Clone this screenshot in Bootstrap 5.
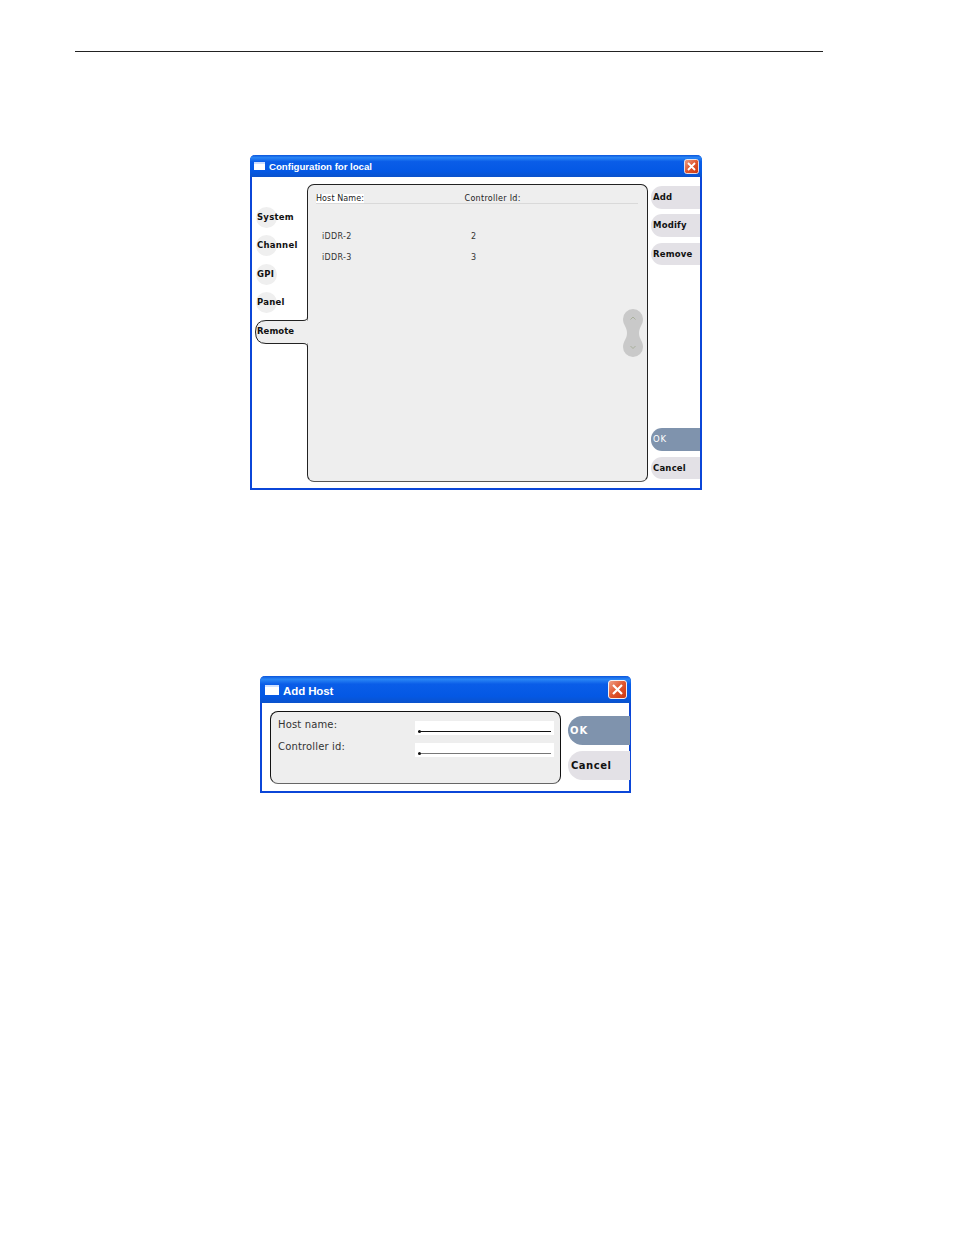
<!DOCTYPE html>
<html lang="en"><head><meta charset="utf-8"><title>Remote configuration</title>
<link href="https://cdn.jsdelivr.net/npm/bootstrap@5.3.0/dist/css/bootstrap.min.css" rel="stylesheet">
<style>
html,body{margin:0;background:#fff;height:1235px;overflow:hidden}
body{font-family:"DejaVu Sans",sans-serif;color:#111}
.top-rule{margin:51px 131px 0 75px;border-top:1px solid #222;height:0}
.xp-win{border:2px solid #0b46d8;border-top:0;border-radius:5px 5px 0 0;background:#fff}
.win-one{width:452px;height:335px;margin:103px 0 0 250px}
.win-two{width:371px;height:117px;margin:186px 0 0 260px}
.xp-bar{margin:0 -2px;background:linear-gradient(#0a55dc,#2a86f5 12%,#0a5de8 30%,#0458e4 75%,#0a52cc);color:#fff;border-radius:5px 5px 0 0;font-family:"Liberation Sans",sans-serif;font-weight:700}
.bar-txt{position:relative}
.win-one .xp-bar{height:22px;padding:0 3px 0 4px;font-size:9.7px;letter-spacing:-.04px;gap:4px}
.win-two .xp-bar{height:27px;padding:0 4px 0 5px;font-size:11.5px;letter-spacing:-.1px;gap:4px}
.win-one .bar-txt{top:1.500px}
.win-two .bar-txt{top:2px}
.bar-ico{background:#fff;border-top:2px solid #cfe0ff;flex:none}
.win-one .bar-ico{width:11px;height:8px}
.win-two .bar-ico{width:14px;height:10px}
.xp-close{flex:none;margin-left:auto;display:block;border-radius:2px}
.win-one .xp-close{width:15px;height:15px}
.win-two .xp-close{width:19px;height:19px}
.one-body{height:313px;padding:7px 0 8px 3px}
.tab-col{width:52px;flex:none;padding-top:23px;gap:6.4px}
.tab-item{height:22px;font-size:8.5px;font-weight:700;letter-spacing:.25px;line-height:21px;padding-left:2px;position:relative;white-space:nowrap}
.tab-item::before{content:"";position:absolute;left:1px;top:0;width:21px;height:21px;border-radius:50%;background:#efefef;z-index:0}
.tab-item span{position:relative}
.tab-on{height:24px;line-height:20px;padding-left:2px;position:relative;z-index:2;width:54px;letter-spacing:.05px}
.tab-on::before{display:none}
.tab-shape{position:absolute;left:0;top:-5px;width:56px;height:34px}
.one-panel{width:341px;flex:none;height:298px;background:#eee;border:1px solid #222;border-bottom-color:#555;border-radius:7px;position:relative;padding:9px 9px 0 8px}
.col-a{width:148.500px;flex:none}
.head-row{font-size:8px;letter-spacing:.3px;line-height:10px;height:10px;border-bottom:1px solid #d9d9d9;color:#222}
.head-a{background:#fff;letter-spacing:.1px}
.data-row{font-size:8px;letter-spacing:.3px;line-height:10px;color:#333;padding-left:6px}
.data-row .col-a{width:149px}
.row-first{margin-top:28px}.row-next{margin-top:11px}
.scroller{position:absolute;left:315px;top:124px;width:20px;height:48px}
.btn-col{width:49px;flex:none;margin-left:3px;height:295px;padding-top:2px}
.pill{height:22.5px;border-radius:11px 0 0 11px;background:#e3e1e6;font-size:8.5px;font-weight:700;letter-spacing:.2px;line-height:23px;padding-left:2px;margin-bottom:5.800px;color:#111;white-space:nowrap}
.pill-on{background:#7f93ad;color:#fff;font-weight:400;letter-spacing:.9px;margin-top:auto}
.two-body{height:90px;padding:8px 0 0 8px}
.two-panel{width:291px;height:73px;flex:none;background:#eee;border:1.5px solid #111;border-bottom-color:#666;border-radius:8px;padding:4px 6px 0 7px;font-size:10px;letter-spacing:.15px;color:#333}
.form-line{height:22px}
.lab-cell{width:137px;flex:none;line-height:18px}
.lab-low{line-height:17px}
.fld-cell{width:139px;height:14px;flex:none;background:#fff;margin-top:5px;position:relative;padding:0 3px 0 3px}
.fld-rule{margin-top:10px;height:0;border-top:1px solid #111;position:relative}
.fld-rule::before{content:"";position:absolute;left:0;top:-2px;width:3px;height:3px;border-radius:50%;background:#111}
.fld-dim{border-top-color:#777}
.pill-col{width:62px;flex:none;margin-left:7px;padding-top:5px}
.pill-big{height:29px;border-radius:15px 0 0 15px;font-size:10px;line-height:29px;padding-left:3px;margin-bottom:6px;letter-spacing:.5px}
.pill-big.pill-on{font-weight:700;padding-left:2px;letter-spacing:1px}
</style></head><body>
<div class="top-rule"></div>

<section class="xp-win win-one">
  <div class="xp-bar d-flex align-items-center"><i class="bar-ico"></i><span class="bar-txt">Configuration for local</span>
    <svg class="xp-close" viewBox="0 0 15 15"><defs><linearGradient id="c1" x1="0" y1="0" x2="1" y2="1"><stop offset="0" stop-color="#f0a48c"/><stop offset=".5" stop-color="#e0562e"/><stop offset="1" stop-color="#c8340f"/></linearGradient></defs><rect x=".5" y=".5" width="14" height="14" rx="2" fill="url(#c1)" stroke="#fff" stroke-width=".8"/><path d="M4 4l7 7M11 4l-7 7" stroke="#fff" stroke-width="1.8"/></svg></div>
  <div class="one-body d-flex">
    <div class="tab-col d-flex flex-column">
      <div class="tab-item"><span>System</span></div>
      <div class="tab-item"><span>Channel</span></div>
      <div class="tab-item"><span>GPI</span></div>
      <div class="tab-item"><span>Panel</span></div>
      <div class="tab-item tab-on">
        <svg class="tab-shape" viewBox="0 0 56 34"><rect x="40" y="4.500" width="16" height="23" fill="#eee"/><path d="M52.500 0V1Q52.500 4.500 48 4.500H11Q.5 4.500 .5 16Q.5 27.500 11 27.500H48Q52.500 27.500 52.500 31V34" fill="#eee" stroke="#222" stroke-width="1"/><rect x="48" y="5.500" width="8" height="21" fill="#eee"/></svg>
        <span>Remote</span></div>
    </div>
    <div class="one-panel">
      <div class="head-row d-flex"><div class="col-a"><span class="head-a">Host Name:</span></div><div>Controller Id:</div></div>
      <div class="data-row d-flex row-first"><div class="col-a">iDDR-2</div><div>2</div></div>
      <div class="data-row d-flex row-next"><div class="col-a">iDDR-3</div><div>3</div></div>
      <svg class="scroller" viewBox="0 0 20 48"><path d="M10 0a10 10 0 0 1 10 10c0 6-4 8-4 14s4 8 4 14a10 10 0 0 1-20 0c0-6 4-8 4-14s-4-8-4-14A10 10 0 0 1 10 0z" fill="#c9c9c9"/><path d="M7.500 10.500l2.500-2.500 2.500 2.500M7.500 37l2.500 2.500 2.500-2.500" fill="none" stroke="#a9b09c" stroke-width="1"/></svg>
    </div>
    <div class="btn-col d-flex flex-column">
      <div class="pill">Add</div><div class="pill">Modify</div><div class="pill">Remove</div>
      <div class="pill pill-on">OK</div><div class="pill mb-0">Cancel</div>
    </div>
  </div>
</section>

<section class="xp-win win-two">
  <div class="xp-bar d-flex align-items-center"><i class="bar-ico"></i><span class="bar-txt">Add Host</span>
    <svg class="xp-close" viewBox="0 0 19 19"><defs><linearGradient id="c2" x1="0" y1="0" x2="1" y2="1"><stop offset="0" stop-color="#f0a48c"/><stop offset=".5" stop-color="#e0562e"/><stop offset="1" stop-color="#c8340f"/></linearGradient></defs><rect x=".5" y=".5" width="18" height="18" rx="2.500" fill="url(#c2)" stroke="#fff" stroke-width=".9"/><path d="M5 5l9 9M14 5l-9 9" stroke="#fff" stroke-width="2.200"/></svg></div>
  <div class="two-body d-flex">
    <div class="two-panel">
      <div class="form-line d-flex"><div class="lab-cell">Host name:</div><div class="fld-cell"><div class="fld-rule"></div></div></div>
      <div class="form-line d-flex"><div class="lab-cell lab-low">Controller id:</div><div class="fld-cell"><div class="fld-rule fld-dim"></div></div></div>
    </div>
    <div class="pill-col">
      <div class="pill pill-big pill-on">OK</div>
      <div class="pill pill-big mb-0">Cancel</div>
    </div>
  </div>
</section>
<script src="https://cdn.jsdelivr.net/npm/bootstrap@5.3.0/dist/js/bootstrap.bundle.min.js"></script>
</body></html>
